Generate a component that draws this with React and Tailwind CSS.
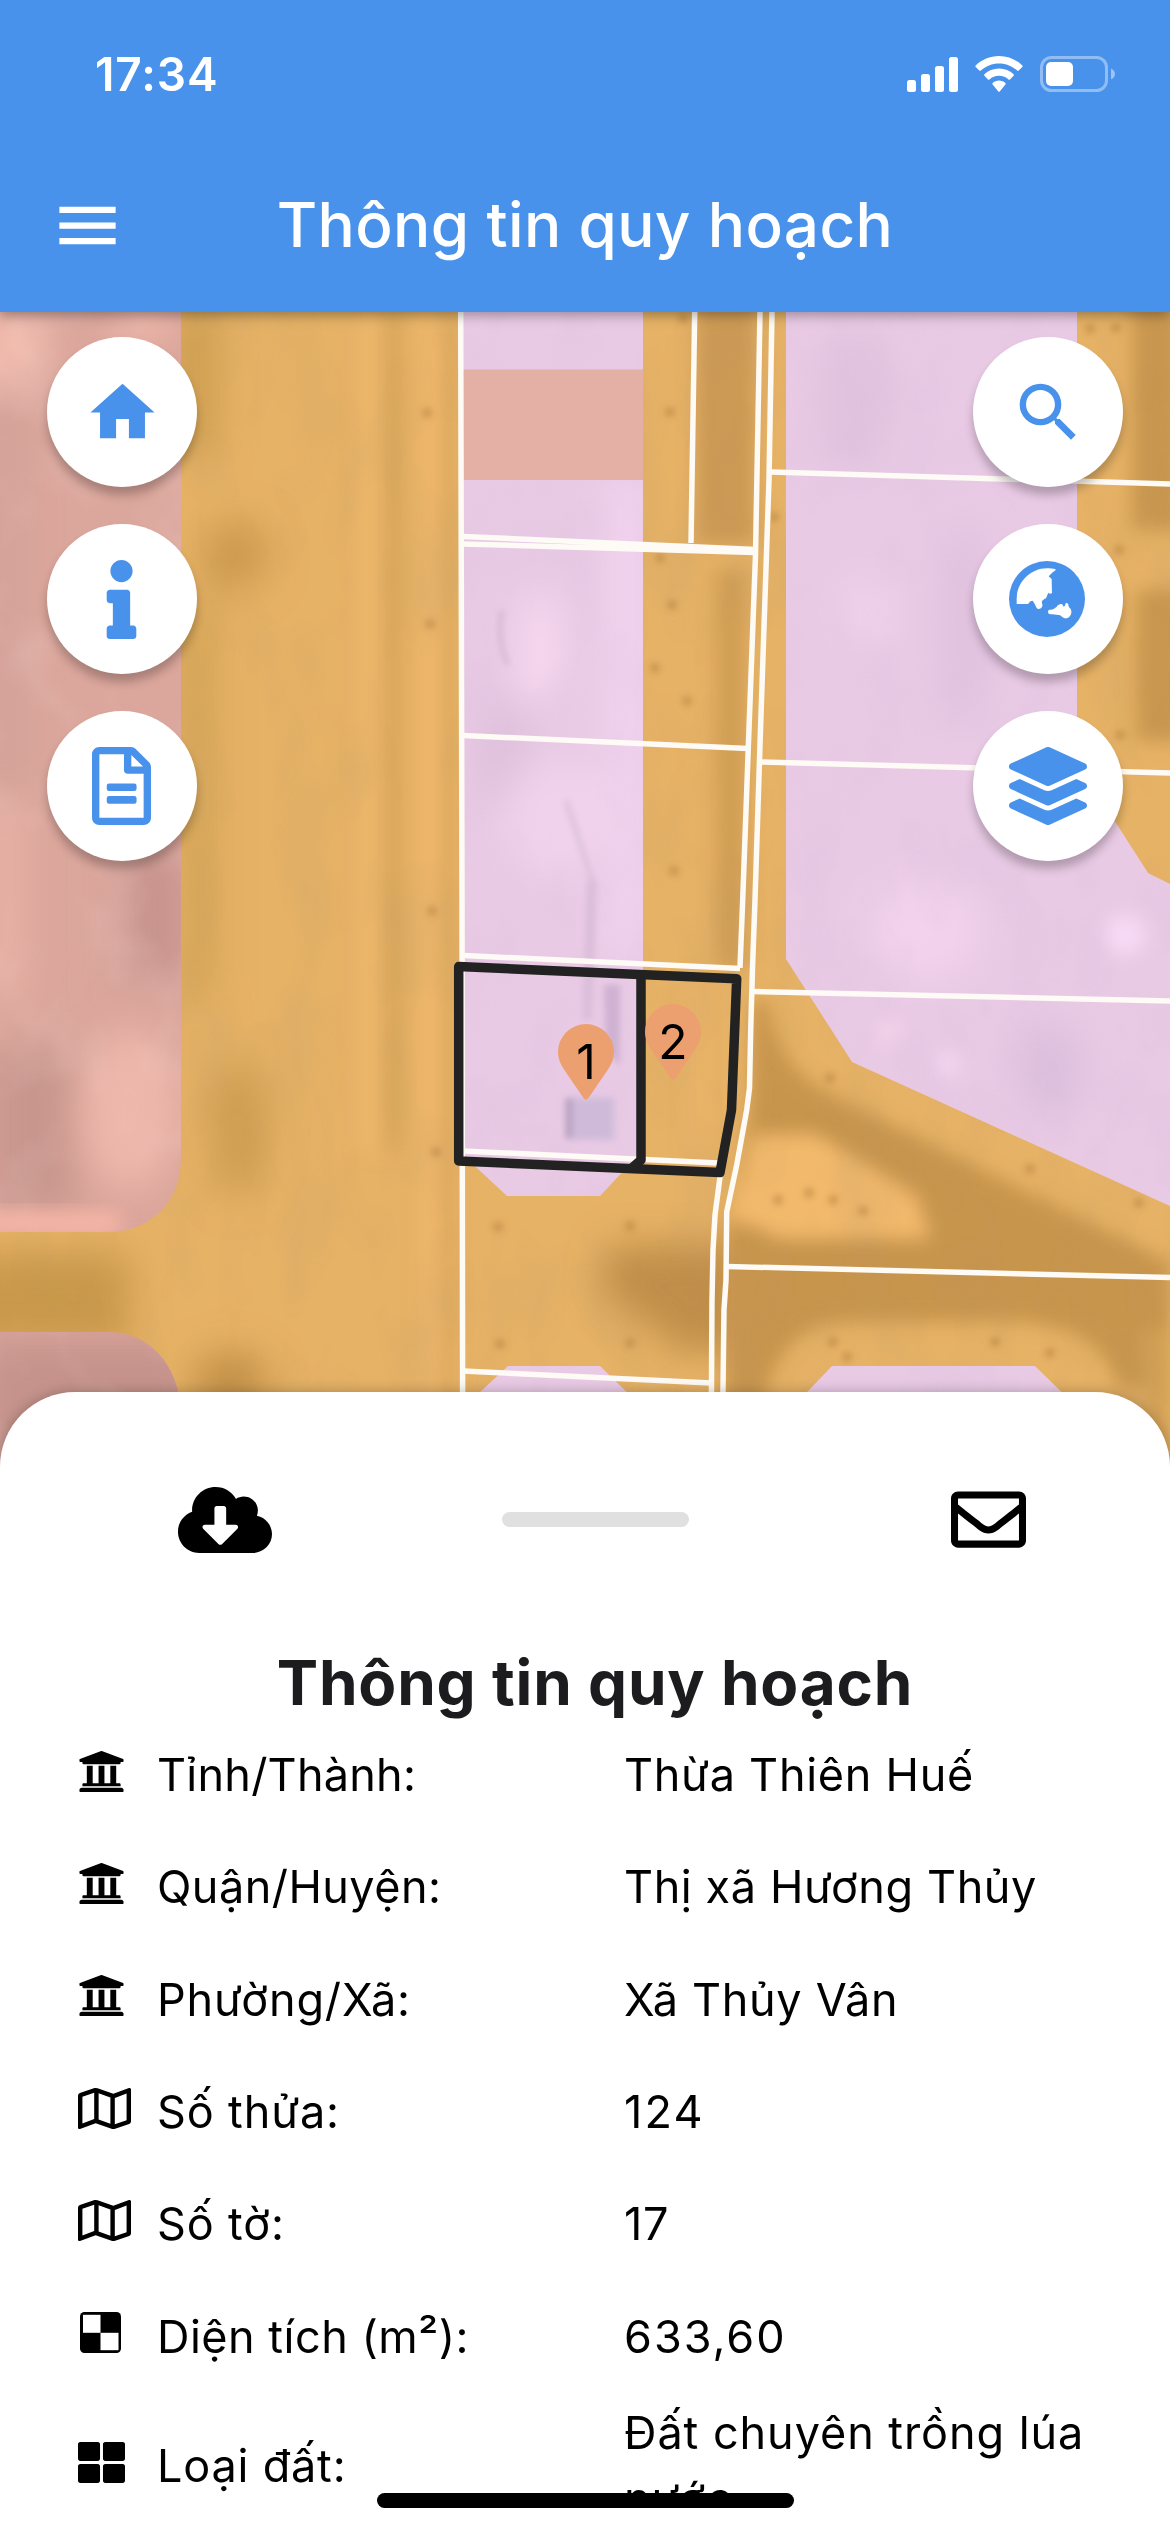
import {
  FaInfo,
  FaLayerGroup,
  FaCloudDownloadAlt,
  FaRegEnvelope,
  FaUniversity,
  FaRegMap,
  FaThLarge,
} from "react-icons/fa";
import { MdHome, MdMenu, MdSearch } from "react-icons/md";

function SignalIcon() {
  return (
    <svg width="51" height="35" viewBox="0 0 51 35" fill="white">
      <rect x="0" y="23" width="9" height="12" rx="2.5" />
      <rect x="14" y="17" width="9" height="18" rx="2.5" />
      <rect x="28" y="9" width="9" height="26" rx="2.5" />
      <rect x="42" y="0" width="9" height="35" rx="2.5" />
    </svg>
  );
}

function WifiIcon() {
  return (
    <svg width="48" height="36" viewBox="0 0 48 36" fill="white">
      <path d="M24 0C14.9 0 6.700 3.600 .7 9.400c-.4.400-.4 1.100 0 1.500l3.600 3.700c.4.400 1 .4 1.500 0C10.600 10.100 17 7.400 24 7.400s13.400 2.700 18.200 7.200c.5.400 1.100.4 1.500 0l3.600-3.700c.4-.4.4-1.100 0-1.500C41.300 3.600 33.100 0 24 0z" />
      <path d="M24 12.500c-5.700 0-10.800 2.200-14.600 5.700-.4.400-.4 1.100 0 1.500l3.600 3.700c.4.400 1 .4 1.500 0 2.500-2.200 5.800-3.600 9.500-3.600s7 1.400 9.500 3.600c.5.400 1.100.4 1.500 0l3.600-3.700c.4-.4.4-1.100 0-1.500-3.800-3.500-8.900-5.700-14.600-5.700z" />
      <path d="M24 24.600c-2.400 0-4.600.9-6.300 2.300-.5.400-.5 1.100-.1 1.600l5.700 6.900c.4.400 1 .4 1.400 0l5.700-6.900c.4-.5.4-1.200-.1-1.600-1.700-1.400-3.900-2.300-6.300-2.300z" />
    </svg>
  );
}

function BatteryIcon() {
  return (
    <svg width="75" height="36" viewBox="0 0 75 36" fill="none">
      <rect x="1.500" y="1.500" width="65" height="33" rx="10" stroke="white" strokeOpacity=".4" strokeWidth="3" />
      <rect x="6" y="6" width="27" height="24" rx="5" fill="white" />
      <path d="M71 12.500c2.400 1 4 3 4 5.500s-1.600 4.500-4 5.500z" fill="white" fillOpacity=".45" />
    </svg>
  );
}

function DocumentIcon() {
  return (
    <svg width="59" height="78" viewBox="0 0 384 512" fill="currentColor" preserveAspectRatio="none" className="-ml-[2px]">
      <path d="M369.900 97.900L286 14C277 5 264.800 0 252.100 0H48C21.500 0 0 21.500 0 48v416c0 26.500 21.500 48 48 48h288c26.500 0 48-21.500 48-48V131.900c0-12.700-5.100-25-14.100-34zM332.100 128H256V51.900l76.100 76.100zM48 464V48h160v104c0 13.300 10.700 24 24 24h104v288H48z" />
      <rect x="96" y="239" width="194" height="50" rx="15" />
      <rect x="96" y="321" width="194" height="52" rx="15" />
    </svg>
  );
}

function GlobeIcon() {
  return (
    <svg width="76" height="76" viewBox="27 29 228 228" className="-ml-[2px]">
      <circle cx="141" cy="143" r="114" fill="currentColor" />
      <path
        fill="white"
        d="M50 158V143C50 92 92 51 141 51C151 51 159 52 167 54C168 57 163 60 158 63L146 75L155 83L156 126L149 127L145 124L138 141L133 143L126 149C124 155 130 160 126 167C122 174 113 174 110 170L102 154L98 148L91 150L84 158Z"
      />
      <path
        fill="white"
        d="M144 181C144 176 147 175 151 175C160 175 165 170 170 166C176 158 186 155 189 163C191 168 195 166 196 159C197 154 203 154 205 160L207 168C214 172 216 182 213 189C209 198 203 203 194 201C186 199 184 192 177 191C167 190 160 190 152 189C146 188 144 185 144 181Z"
      />
    </svg>
  );
}

function CheckerIcon() {
  return (
    <svg width="41" height="41" viewBox="0 0 41 41" className="ml-[2px]">
      <rect width="41" height="41" rx="4.500" fill="black" />
      <rect x="3" y="2.800" width="17.500" height="18" fill="white" />
      <rect x="20.500" y="20.800" width="18" height="17.400" fill="white" />
    </svg>
  );
}

function RoundButton({ children }) {
  return (
    <button className="flex size-[150px] items-center justify-center rounded-full bg-white text-[#4992ec] shadow-[0_8px_10px_rgba(0,0,0,0.24)]">
      {children}
    </button>
  );
}

function Marker({ label, className }) {
  return (
    <div className={"absolute h-[76px] w-14 " + className}>
      <svg width="56" height="76" viewBox="0 0 56 76" className="absolute inset-0">
        <path fill="#eca06f" d="M28 0A28 28 0 0 0 0 28C0 35 3 41 7 47L25.500 74Q28 77 30.500 74L49 47C53 41 56 35 56 28A28 28 0 0 0 28 0Z" />
      </svg>
      <span className="absolute inset-x-0 top-[9px] text-center text-[48px] leading-[58px] text-black">{label}</span>
    </div>
  );
}

const poles = [
  [427, 413], [430, 624], [432, 911], [436, 1152], [670, 412], [660, 558], [672, 605], [655, 668], [687, 701], [674, 871],
  [683, 318], [774, 517], [498, 1227], [630, 1226], [500, 1344], [630, 1343], [778, 1200], [809, 1193], [833, 1200], [863, 1211],
  [833, 1342], [847, 1357], [995, 1342], [1050, 1353], [1139, 1203], [830, 1078], [1030, 1169], [1090, 329], [1116, 328], [1119, 550], [1120, 735],
];

function MapImage() {
  return (
    <svg width="1170" height="1156" viewBox="0 312 1170 1156" className="block">
      <defs>
        <filter id="soft" x="-30%" y="-30%" width="160%" height="160%">
          <feGaussianBlur stdDeviation="9" />
        </filter>
        <filter id="softest" x="-30%" y="-30%" width="160%" height="160%">
          <feGaussianBlur stdDeviation="18" />
        </filter>
        <filter id="softer" x="-30%" y="-30%" width="160%" height="160%">
          <feGaussianBlur stdDeviation="3" />
        </filter>
        <filter id="ground" x="0" y="0" width="100%" height="100%">
          <feTurbulence type="fractalNoise" baseFrequency="0.018 0.008" numOctaves="3" seed="8" />
          <feColorMatrix type="matrix" values="0 0 0 0 .45  0 0 0 0 .3  0 0 0 0 .15  2.200 0 0 0 -1" />
        </filter>
        <filter id="light" x="0" y="0" width="100%" height="100%">
          <feTurbulence type="fractalNoise" baseFrequency="0.014 0.012" numOctaves="3" seed="21" />
          <feColorMatrix type="matrix" values="0 0 0 0 1  0 0 0 0 .85  0 0 0 0 .8  2.200 0 0 0 -1" />
        </filter>
        <filter id="lilacNoise" x="0" y="0" width="100%" height="100%">
          <feTurbulence type="fractalNoise" baseFrequency="0.02 0.012" numOctaves="3" seed="5" />
          <feColorMatrix type="matrix" values="0 0 0 0 .6  0 0 0 0 .45  0 0 0 0 .65  2.200 0 0 0 -1" />
        </filter>
        <clipPath id="pinkArea">
          <path d="M0 312H181V1158C181 1202 150 1232 108 1232H0ZM0 1332H108C150 1332 178 1365 181 1410V1468H0Z" />
        </clipPath>
        <clipPath id="lilacArea">
          <path d="M463 312H643V1150L600 1196H507L463 1155ZM786 312H1077V762L1118 826L1148 873L1170 884V1206L852 1062L786 959ZM463 1408L508 1366H600L643 1408V1468H463ZM790 1410L832 1366H1035L1080 1410V1468H790Z" />
        </clipPath>
      </defs>

      <rect y="312" width="1170" height="1156" fill="#e6b266" />

      <g filter="url(#softest)">
        <rect x="176" y="312" width="40" height="140" fill="#cc9d50" />
        <rect x="176" y="600" width="40" height="400" fill="#cf9f52" opacity=".7" />
        <ellipse cx="235" cy="555" rx="34" ry="36" fill="#cc9a50" />
        <ellipse cx="238" cy="1130" rx="30" ry="70" fill="#cf9e52" />
        <rect x="-40" y="1254" width="170" height="90" fill="#c9994c" />
        <ellipse cx="230" cy="1385" rx="40" ry="34" fill="#c4924a" />
        <path d="M610 1245H740V1350H680L600 1290Z" fill="#c08e49" />
      </g>
      <g filter="url(#soft)">
        <rect x="360" y="312" width="20" height="840" fill="#efb96e" opacity=".7" />
        <rect x="384" y="312" width="16" height="840" fill="#d3a055" opacity=".8" />
        <rect x="422" y="312" width="18" height="1100" fill="#f2ba6e" opacity=".8" />
        <rect x="442" y="312" width="10" height="1100" fill="#d5a156" opacity=".8" />
        <rect x="697" y="300" width="58" height="244" fill="#cc9a54" />
        <rect x="716" y="570" width="30" height="400" fill="#cd9b53" opacity=".9" />
        <rect x="690" y="975" width="10" height="180" fill="#efb76c" />
        <rect x="1132" y="300" width="50" height="230" fill="#c8964f" />
        <rect x="1136" y="590" width="50" height="150" fill="#c9974f" />
        <path d="M752 1000H768C778 1060 800 1080 850 1104L1170 1262V1390H1120C1100 1330 1060 1318 960 1322H850C800 1324 775 1350 765 1400H726V1230L750 1110Z" fill="#c8954d" />
        <path d="M755 1135H815L915 1195L930 1238H775C762 1220 740 1230 730 1215Z" fill="#f2b96c" />
        <path d="M1140 1330L1170 1330V1468H1150Z" fill="#d3a055" />
      </g>
      <rect y="312" width="1170" height="1156" filter="url(#ground)" opacity=".16" />

      <g clipPath="url(#pinkArea)">
        <rect y="312" width="190" height="1156" fill="#dba69c" />
        <g filter="url(#softest)">
          <ellipse cx="10" cy="345" rx="40" ry="42" fill="#f0b9ac" />
          <ellipse cx="145" cy="322" rx="30" ry="20" fill="#f0b9ac" />
          <rect x="-10" y="400" width="34" height="400" fill="#cf9e96" opacity=".6" />
          <rect x="-10" y="800" width="34" height="200" fill="#e9b2a6" />
          <rect x="125" y="850" width="60" height="130" fill="#c7938d" />
          <rect x="-10" y="1050" width="84" height="160" fill="#c8968d" />
          <ellipse cx="130" cy="1110" rx="50" ry="80" fill="#eeb7ab" />
          <rect x="-20" y="1340" width="220" height="140" fill="#c5938b" />
        </g>
        <rect x="-20" y="1211" width="140" height="24" fill="#f5b5a5" filter="url(#soft)" />
        <rect y="312" width="190" height="1156" filter="url(#light)" opacity=".16" />
      </g>

      <g clipPath="url(#lilacArea)">
        <rect x="463" y="312" width="707" height="1156" fill="#e9cae5" />
        <g filter="url(#softest)">
          <rect x="610" y="480" width="30" height="480" fill="#f4d6f2" />
          <ellipse cx="540" cy="650" rx="16" ry="60" fill="#fbdcf2" />
          <ellipse cx="500" cy="760" rx="26" ry="60" fill="#dfc1dc" />
          <ellipse cx="560" cy="820" rx="60" ry="60" fill="#f1d2ec" />
          <ellipse cx="855" cy="400" rx="40" ry="70" fill="#e0c2de" />
          <ellipse cx="965" cy="620" rx="24" ry="100" fill="#dfc1de" />
          <ellipse cx="868" cy="610" rx="18" ry="28" fill="#f8daf2" />
          <ellipse cx="920" cy="930" rx="60" ry="50" fill="#f2d2ec" />
          <ellipse cx="1050" cy="1070" rx="36" ry="50" fill="#dcc0dd" />
        </g>
        <g filter="url(#soft)">
          <ellipse cx="1125" cy="935" rx="20" ry="20" fill="#f7daf5" />
          <ellipse cx="948" cy="1064" rx="10" ry="10" fill="#f9daf5" />
          <ellipse cx="888" cy="1032" rx="10" ry="14" fill="#f5d2ea" />
        </g>
        <rect x="463" y="312" width="707" height="1156" filter="url(#lilacNoise)" opacity=".12" />
      </g>
      <rect x="463" y="369.500" width="180" height="110.500" fill="#e4afa5" />
      <g filter="url(#softer)">
        <path d="M502 610Q496 640 508 665" fill="none" stroke="#d2b5d1" strokeWidth="4" />
        <path d="M566 800L592 880" fill="none" stroke="#dbbfda" strokeWidth="5" />
        <path d="M592 880L587 1020" fill="none" stroke="#dabdd9" strokeWidth="10" />
        <path d="M604 985H620V1066L606 1050Z" fill="#cfb1d2" />
        <rect x="566" y="1098" width="48" height="42" fill="#cfbbd9" />
        <rect x="565" y="1098" width="8" height="40" fill="#baa4c2" />
      </g>
      <g filter="url(#softer)" fill="#b5803f" opacity=".55">
        {poles.map(([x, y]) => (
          <circle key={x + "-" + y} cx={x} cy={y} r="5" />
        ))}
      </g>

      <g fill="none" stroke="#fefaf5" strokeWidth="5.500">
        <path d="M460.700 312L462 900L462.700 1468" />
        <path d="M694.700 312L691 543" />
        <path d="M760 312L755.500 555L748.300 748L742.700 900L740 968M720 1177L715 1215L713 1250L712 1300L711 1468" />
        <path d="M772 312L769 480L760 745L755 900L752.500 968L750.700 1030L749.500 1088L746.700 1110L736.700 1165L726.700 1212L726 1280L724 1310L722 1468" />
        <path d="M463 536.500L755 549.500M463 544L755 552.500" />
        <path d="M463 735.500L748 748.500" />
        <path d="M464 955.500L740 968.500" />
        <path d="M463 1151L718 1163" />
        <path d="M463 1371L711 1383" />
        <path d="M771 472L1170 484M762 762L1170 773M753 991.500L1170 1001M727 1266.500L1170 1277.500" />
      </g>

      <g fill="none" stroke="#222222" strokeWidth="9.500" strokeLinejoin="round" strokeLinecap="round">
        <path d="M458.700 966.500L736.700 978.700L731.500 1110L720 1172.500L458.700 1161Z" />
        <path d="M641 976V1160L633 1167" />
      </g>
    </svg>
  );
}

const rows = [
  { icon: <FaUniversity size={47} />, label: "Tỉnh/Thành:", value: "Thừa Thiên Huế", ls: "tracking-[0.25px]", vs: "tracking-[0.73px]" },
  { icon: <FaUniversity size={47} />, label: "Quận/Huyện:", value: "Thị xã Hương Thủy", ls: "tracking-[0.46px]", vs: "tracking-[0.6px]" },
  { icon: <FaUniversity size={47} />, label: "Phường/Xã:", value: "Xã Thủy Vân", ls: "tracking-[0.85px]", vs: "tracking-[0.67px]" },
  { icon: <FaRegMap size={53} />, label: "Số thửa:", value: "124", ls: "tracking-[0.86px]", vs: "tracking-[2.2px]" },
  { icon: <FaRegMap size={53} />, label: "Số tờ:", value: "17", ls: "tracking-[0.86px]", vs: "tracking-[0.8px]" },
  { icon: <CheckerIcon />, label: "Diện tích (m²):", value: "633,60", ls: "tracking-[0.5px]", vs: "tracking-[2px]" },
  { icon: <FaThLarge size={47} />, label: "Loại đất:", value: "Đất chuyên trồng lúa nước", ls: "tracking-[0.8px]", vs: "tracking-[0.94px]", tall: true },
];

export default function App() {
  return (
    <div className="relative h-[2532px] w-[1170px] overflow-hidden bg-white font-['Inter',sans-serif] text-black">
      <header className="relative z-10 flex h-[312px] flex-col bg-[#4992ec] text-white shadow-[0_3px_12px_rgba(0,0,0,0.35)]">
        <div className="flex h-[148px] items-center justify-between pr-[55px] pl-[95px]">
          <span className="text-[46px] leading-[56px] font-semibold tracking-[0.92px]">17:34</span>
          <div className="flex items-center gap-[17px]">
            <SignalIcon />
            <WifiIcon />
            <BatteryIcon />
          </div>
        </div>
        <div className="flex h-[154px] items-center pr-[125px] pl-[50px]">
          <MdMenu size={75} />
          <h1 className="flex-1 text-center text-[62px] leading-[72px] font-medium tracking-[0.37px]">Thông tin quy hoạch</h1>
        </div>
      </header>

      <main className="relative h-[1156px]">
        <MapImage />
        <Marker label="1" className="top-[712px] left-[558px]" />
        <Marker label="2" className="top-[692px] left-[645px]" />
        <div className="absolute top-[25px] left-[47px] flex flex-col gap-[37px]">
          <RoundButton><MdHome size={77} /></RoundButton>
          <RoundButton><FaInfo size={79} className="-ml-[2px]" /></RoundButton>
          <RoundButton><DocumentIcon /></RoundButton>
        </div>
        <div className="absolute top-[25px] right-[47px] flex flex-col gap-[37px]">
          <RoundButton><MdSearch size={77} /></RoundButton>
          <RoundButton><GlobeIcon /></RoundButton>
          <RoundButton><FaLayerGroup size={78} /></RoundButton>
        </div>
      </main>

      <section className="relative -mt-[76px] h-[1140px] rounded-t-[75px] bg-white shadow-[0_0_14px_rgba(0,0,0,0.25)]">
        <div className="h-[1108px] overflow-hidden">
          <div className="flex h-[255px] items-center pl-[178px]">
            <FaCloudDownloadAlt size={94} />
            <div className="ml-[230px] h-[15px] w-[187px] rounded-full bg-[#e0e0e0]" />
            <FaRegEnvelope size={75} className="ml-[262px]" />
          </div>
          <h2 className="pl-[20px] text-center text-[62px] leading-[72px] font-bold tracking-[0.8px] text-[#1c1b1d]">
            Thông tin quy hoạch
          </h2>
          <div className="flex flex-col pl-[78px]">
            {rows.map((row) => (
              <div
                key={row.label}
                className={"flex shrink-0 items-center text-[45px] leading-[66px] " + (row.tall ? "h-[147px]" : "h-[112.3px]")}
              >
                <div className="mb-[8px] flex w-[79px] shrink-0 items-center">{row.icon}</div>
                <div className={"w-[467px] shrink-0 " + row.ls}>{row.label}</div>
                <div className={"w-[490px] " + row.vs}>{row.value}</div>
              </div>
            ))}
          </div>
        </div>
      </section>

      <div className="absolute bottom-[24px] left-[377px] h-[15px] w-[417px] rounded-full bg-black" />
    </div>
  );
}
